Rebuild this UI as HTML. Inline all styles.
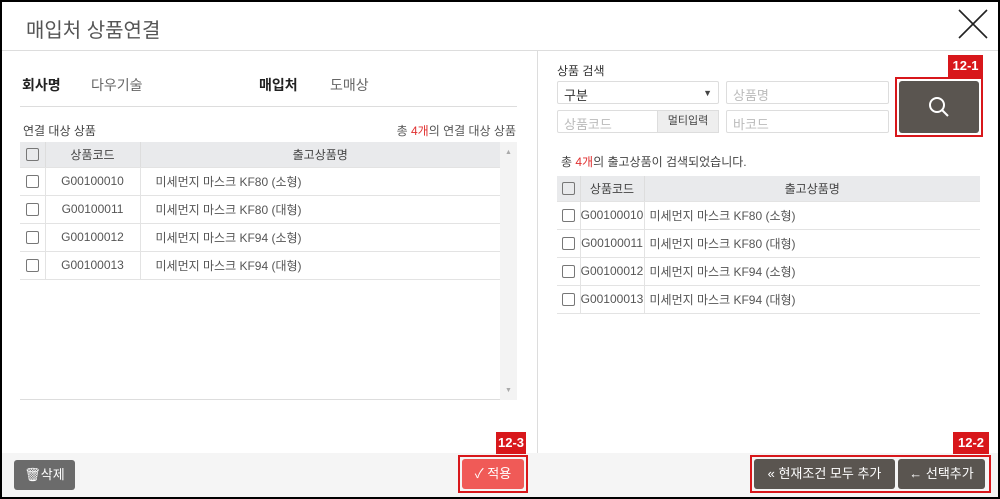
<!DOCTYPE html>
<html><head><meta charset="utf-8"><style>
*{box-sizing:border-box;margin:0;padding:0}
body{width:1000px;height:499px;overflow:hidden;background:#000;font-family:"Liberation Sans","Noto Sans CJK KR",sans-serif;color:#333}
.win{position:absolute;left:2px;top:2px;width:996px;height:495px;background:#fff}
.a{position:absolute}
.title{left:24px;top:12px;font-size:20px;color:#555}
.hl{left:0;top:48px;width:996px;height:1px;background:#ddd}
.vl{left:535px;top:49px;width:1px;height:446px;background:#ddd}
.foot{left:0;top:451px;width:996px;height:44px;background:#f5f5f5}
table{border-collapse:collapse;font-size:12px;color:#555}
td,th{height:28px;border-bottom:1px solid #e3e3e3;vertical-align:middle}
th{background:#e9eaec;font-weight:normal;height:25px;color:#444}
.cb{display:inline-block;width:13px;height:13px;border:1px solid #777;border-radius:2px;vertical-align:middle}
.inp{border:1px solid #ddd;border-radius:2px;font-size:13px;color:#bbb;padding:3px 6px;height:23px}
.red{color:#e03030}
.lbl{background:#d8171b;color:#fff;font-size:13px;font-weight:bold;text-align:center;line-height:22px}
.rb{border:2px solid #d8171b}
.btn{color:#fff;font-size:13px;text-align:center;line-height:30px;border-radius:3px}
</style></head><body><div class="win">
<div class="a title">매입처 상품연결</div>
<svg class="a" style="left:955px;top:6px" width="32" height="32"><path d="M2 2L30 30M30 2L2 30" stroke="#222" stroke-width="1.6"/></svg>
<div class="a hl"></div><div class="a vl"></div>
<div class="a" style="left:20px;top:73px;font-size:14px;font-weight:bold;color:#222">회사명</div>
<div class="a" style="left:89px;top:73px;font-size:14px;color:#666">다우기술</div>
<div class="a" style="left:257px;top:73px;font-size:14px;font-weight:bold;color:#222">매입처</div>
<div class="a" style="left:328px;top:73px;font-size:14px;color:#666">도매상</div>
<div class="a" style="left:18px;top:104px;width:497px;height:1px;background:#ddd"></div>
<div class="a" style="left:21px;top:120px;font-size:12px;color:#444">연결 대상 상품</div>
<div class="a" style="right:482px;top:120px;font-size:12px;color:#555">총 <span class="red">4개</span>의 연결 대상 상품</div>
<div class="a" style="left:18px;top:140px;width:497px;height:258px;border-bottom:1px solid #ddd">
<table style="width:480px"><tr><th style="width:25px"><span class="cb"></span></th><th style="width:95px;border-left:1px solid #ddd">상품코드</th><th style="border-left:1px solid #ddd">출고상품명</th></tr>
<tr><td align=center><span class="cb"></span></td><td align=center style="border-left:1px solid #e3e3e3">G00100010</td><td style="padding-left:15px;border-left:1px solid #e3e3e3">미세먼지 마스크 KF80 (소형)</td></tr>
<tr><td align=center><span class="cb"></span></td><td align=center style="border-left:1px solid #e3e3e3">G00100011</td><td style="padding-left:15px;border-left:1px solid #e3e3e3">미세먼지 마스크 KF80 (대형)</td></tr>
<tr><td align=center><span class="cb"></span></td><td align=center style="border-left:1px solid #e3e3e3">G00100012</td><td style="padding-left:15px;border-left:1px solid #e3e3e3">미세먼지 마스크 KF94 (소형)</td></tr>
<tr><td align=center><span class="cb"></span></td><td align=center style="border-left:1px solid #e3e3e3">G00100013</td><td style="padding-left:15px;border-left:1px solid #e3e3e3">미세먼지 마스크 KF94 (대형)</td></tr></table>
<div class="a" style="left:480px;top:0;width:17px;height:258px;background:#f3f3f3"></div>
<div class="a" style="left:485px;top:7px;font-size:7px;color:#aaa">▲</div>
<div class="a" style="left:485px;top:245px;font-size:7px;color:#aaa">▼</div>
</div>
<div class="a" style="left:555px;top:60px;font-size:12px;color:#333">상품 검색</div>
<div class="a inp" style="left:555px;top:79px;width:162px;color:#333">구분<span style="float:right;font-size:9px;color:#444;line-height:16px">▼</span></div>
<div class="a inp" style="left:724px;top:79px;width:163px">상품명</div>
<div class="a inp" style="left:555px;top:108px;width:162px">상품코드</div>
<div class="a" style="left:655px;top:108px;width:62px;height:23px;background:#eee;border:1px solid #ddd;font-size:11px;color:#444;text-align:center;line-height:21px">멀티입력</div>
<div class="a inp" style="left:724px;top:108px;width:163px">바코드</div>
<div class="a lbl" style="left:946px;top:53px;width:35px">12-1</div>
<div class="a rb" style="left:893px;top:75px;width:88px;height:60px"></div>
<div class="a" style="left:897px;top:79px;width:80px;height:52px;background:#5a5550;border-radius:3px"></div>
<svg class="a" style="left:925px;top:93px" width="24" height="24"><circle cx="10" cy="10" r="7" stroke="#fff" stroke-width="2" fill="none"/><path d="M15 15L21 21" stroke="#fff" stroke-width="2"/></svg>
<div class="a" style="left:559px;top:151px;font-size:12px;color:#444">총 <span class="red">4개</span>의 출고상품이 검색되었습니다.</div>
<table class="a" style="left:555px;top:174px;width:423px"><tr><th style="width:23px"><span class="cb"></span></th><th style="width:64px;border-left:1px solid #ddd">상품코드</th><th style="border-left:1px solid #ddd">출고상품명</th></tr>
<tr><td align=center><span class="cb"></span></td><td align=center style="border-left:1px solid #e3e3e3">G00100010</td><td style="padding-left:5px;border-left:1px solid #e3e3e3">미세먼지 마스크 KF80 (소형)</td></tr>
<tr><td align=center><span class="cb"></span></td><td align=center style="border-left:1px solid #e3e3e3">G00100011</td><td style="padding-left:5px;border-left:1px solid #e3e3e3">미세먼지 마스크 KF80 (대형)</td></tr>
<tr><td align=center><span class="cb"></span></td><td align=center style="border-left:1px solid #e3e3e3">G00100012</td><td style="padding-left:5px;border-left:1px solid #e3e3e3">미세먼지 마스크 KF94 (소형)</td></tr>
<tr><td align=center><span class="cb"></span></td><td align=center style="border-left:1px solid #e3e3e3">G00100013</td><td style="padding-left:5px;border-left:1px solid #e3e3e3">미세먼지 마스크 KF94 (대형)</td></tr></table>
<div class="a foot"></div>
<div class="a btn" style="left:12px;top:458px;width:61px;background:#6b6b6b">🗑삭제</div>
<div class="a lbl" style="left:494px;top:430px;width:30px">12-3</div>
<div class="a rb" style="left:456px;top:453px;width:70px;height:38px"></div>
<div class="a btn" style="left:460px;top:457px;width:62px;background:#f05a57">✓ 적용</div>
<div class="a lbl" style="left:951px;top:430px;width:36px">12-2</div>
<div class="a rb" style="left:748px;top:453px;width:241px;height:38px"></div>
<div class="a btn" style="left:752px;top:457px;width:141px;background:#5a5550">« 현재조건 모두 추가</div>
<div class="a btn" style="left:896px;top:457px;width:87px;background:#5a5550">← 선택추가</div>
</div></body></html>
